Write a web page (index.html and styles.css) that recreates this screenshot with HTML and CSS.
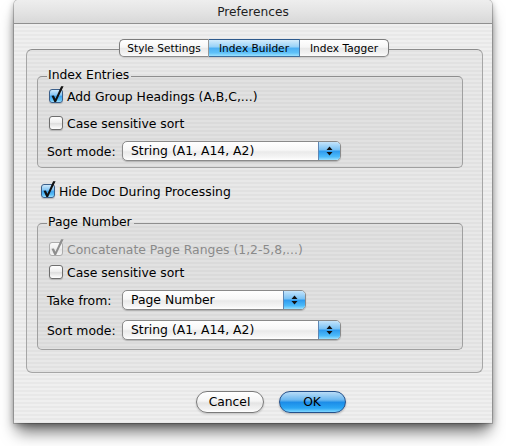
FILE: index.html
```html
<!DOCTYPE html>
<html>
<head>
<meta charset="utf-8">
<link rel="stylesheet" href="styles.css">
</head>
<body>
<div class="window">
  <div class="titlebar">Preferences</div>
  <div class="content">
    <div class="tabs">
      <span class="tab first">Style Settings</span><span class="tab selected">Index Builder</span><span class="tab last">Index Tagger</span>
    </div>
    <div class="pane">
      <fieldset class="group g1">
        <legend>Index Entries</legend>
        <div class="row check r1">
          <span class="cb on"><svg viewBox="0 0 14 14"><path d="M2.3 6.4 L4.6 6 L6 9 L11.3 -2.6 L13.6 -2.6 L6.6 12.2 L5 12.2 Z"/></svg></span>
          <span class="lbl">Add Group Headings (A,B,C,...)</span>
        </div>
        <div class="row check r2">
          <span class="cb"></span>
          <span class="lbl">Case sensitive sort</span>
        </div>
        <div class="row pop r3">
          <span class="plabel">Sort mode:</span>
          <span class="popup wide"><span class="ptext">String (A1, A14, A2)</span><span class="arrows"><svg viewBox="0 0 7 10"><path d="M3.5 0.5 L6.5 4 L0.5 4 Z M0.5 6 L6.5 6 L3.5 9.5 Z"/></svg></span></span>
        </div>
      </fieldset>
      <div class="row check hide">
        <span class="cb on"><svg viewBox="0 0 14 14"><path d="M2.3 6.4 L4.6 6 L6 9 L11.3 -2.6 L13.6 -2.6 L6.6 12.2 L5 12.2 Z"/></svg></span>
        <span class="lbl">Hide Doc During Processing</span>
      </div>
      <fieldset class="group g2">
        <legend>Page Number</legend>
        <div class="row check disabled q1">
          <span class="cb on dis"><svg viewBox="0 0 14 14"><path d="M2.3 6.4 L4.6 6 L6 9 L11.3 -2.6 L13.6 -2.6 L6.6 12.2 L5 12.2 Z"/></svg></span>
          <span class="lbl">Concatenate Page Ranges (1,2-5,8,...)</span>
        </div>
        <div class="row check q2">
          <span class="cb"></span>
          <span class="lbl">Case sensitive sort</span>
        </div>
        <div class="row pop q3">
          <span class="plabel">Take from:</span>
          <span class="popup narrow"><span class="ptext">Page Number</span><span class="arrows"><svg viewBox="0 0 7 10"><path d="M3.5 0.5 L6.5 4 L0.5 4 Z M0.5 6 L6.5 6 L3.5 9.5 Z"/></svg></span></span>
        </div>
        <div class="row pop q4">
          <span class="plabel">Sort mode:</span>
          <span class="popup wide"><span class="ptext">String (A1, A14, A2)</span><span class="arrows"><svg viewBox="0 0 7 10"><path d="M3.5 0.5 L6.5 4 L0.5 4 Z M0.5 6 L6.5 6 L3.5 9.5 Z"/></svg></span></span>
        </div>
      </fieldset>
    </div>
    <div class="buttons">
      <span class="btn cancel">Cancel</span>
      <span class="btn ok">OK</span>
    </div>
  </div>
</div>
</body>
</html>
```
FILE: styles.css
```css
html, body {
  margin: 0;
  padding: 0;
  background: #ffffff;
}
body {
  font-family: "Lucida Grande", "DejaVu Sans", sans-serif;
  font-size: 12.4px;
  color: #000;
  width: 506px;
  height: 446px;
  overflow: hidden;
}
.window {
  margin-left: 14px;
  width: 478px;
  height: 423px;
  box-sizing: border-box;
  border-radius: 5px 5px 0 0;
  background: repeating-linear-gradient(to bottom, #efefef 0, #efefef 2px, #e8e8e8 2px, #e8e8e8 4px);
  box-shadow: 0 12px 16px -3px rgba(0,0,0,0.55), 0 2px 7px rgba(0,0,0,0.35), 0 0 0 1px rgba(0,0,0,0.18);
  display: flex;
  flex-direction: column;
}
.titlebar {
  height: 23px;
  line-height: 24px;
  text-align: center;
  font-size: 12.2px;
  color: #1e1e1e;
  border-radius: 5px 5px 0 0;
  border-bottom: 1px solid #8f8f8f;
  background: linear-gradient(to bottom, #eeeeee 0%, #e4e4e4 50%, #d8d8d8 100%);
  flex: none;
}
.content {
  padding: 15px 9px 0 12px;
  display: flex;
  flex-direction: column;
}
.tabs {
  position: relative;
  z-index: 1;
  display: flex;
  justify-content: center;
  height: 18px;
  margin-bottom: -8px;
  padding-right: 1px;
}
.tab {
  box-sizing: border-box;
  height: 18px;
  line-height: 16px;
  font-size: 10.6px;
  text-align: center;
  border-top: 1px solid #7c7c7c;
  border-bottom: 1px solid #8a8a8a;
  border-right: 1px solid #9a9a9a;
  background: linear-gradient(to bottom, #ffffff 0%, #f6f6f6 45%, #e9e9e9 52%, #f1f1f1 80%, #fcfcfc 100%);
  box-shadow: 0 1px 1px rgba(0,0,0,0.12);
}
.tab.first {
  width: 90px;
  border-left: 1px solid #7c7c7c;
  border-radius: 5px 0 0 5px;
}
.tab.selected {
  width: 91px;
  border-top-color: #2f5a8c;
  border-bottom-color: #3d6d9c;
  border-right-color: #4a78a8;
  background: linear-gradient(to bottom, #d4ecfc 0%, #98d2f8 42%, #4db0f4 52%, #5fc1f8 80%, #9be2ff 100%);
}
.tab.last {
  width: 89px;
  border-right: 1px solid #7c7c7c;
  border-radius: 0 5px 5px 0;
}
.pane {
  box-sizing: border-box;
  height: 324px;
  border: 1px solid #a6a6a6;
  border-top-color: #8c8c8c;
  border-radius: 6px;
  background: rgba(0,0,0,0.028);
  padding: 17px 0 0 10px;
  display: flex;
  flex-direction: column;
  align-items: flex-start;
}
.group {
  box-sizing: border-box;
  width: 426px;
  margin: 0;
  border: 1px solid #a0a0a0;
  border-top-color: #8e8e8e;
  border-radius: 5px;
  background: rgba(0,0,0,0.028);
  padding: 2px 0 6px 9px;
  min-width: 0;
}
.group legend {
  padding: 0 2px 3px 1px;
  margin-left: 0;
  line-height: 15px;
  color: #000;
}
.g2 {
  margin-top: 14px;
  padding-top: 8px;
  padding-bottom: 9px;
}
.row {
  display: flex;
  align-items: center;
}
.check {
  height: 18px;
}
.check .cb {
  margin-left: 2px;
}
.lbl {
  margin-left: 4px;
  white-space: nowrap;
}
.r2 { margin-top: 9px; }
.r3 { margin-top: 9px; }
.hide { margin-top: 14px; }
.hide .cb { margin-left: 4px; }
.q2 { margin-top: 5px; }
.q3 { margin-top: 9px; }
.q4 { margin-top: 10px; }
.disabled .lbl { color: #8a8a8a; }
.cb {
  position: relative;
  flex: none;
  box-sizing: border-box;
  width: 14px;
  height: 14px;
  border: 1px solid #6e6e6e;
  border-radius: 3px;
  background: linear-gradient(to bottom, #fefefe 0%, #efefef 45%, #dedede 55%, #f4f4f4 85%, #ffffff 100%);
  box-shadow: 0 1px 1px rgba(0,0,0,0.18);
}
.cb.on {
  border-color: #3b5f8a;
  background: linear-gradient(to bottom, #cde8fb 0%, #85c6f4 42%, #3ea3ee 52%, #5cc0f8 82%, #a3e2ff 100%);
}
.cb.on.dis {
  border-color: #acacac;
  background: linear-gradient(to bottom, #fafafa 0%, #eeeeee 50%, #e6e6e6 55%, #f6f6f6 100%);
  box-shadow: none;
}
.cb svg {
  position: absolute;
  left: -1px;
  top: -1px;
  width: 15px;
  height: 15px;
  overflow: visible;
  fill: #111;
}
.cb.dis svg { fill: #8e8e8e; }
.pop {
  height: 20px;
}
.plabel {
  width: 75px;
  flex: none;
  white-space: nowrap;
}
.popup {
  box-sizing: border-box;
  height: 20px;
  display: flex;
  border: 1px solid #8a8a8a;
  border-radius: 5px;
  background: linear-gradient(to bottom, #ffffff 0%, #f7f7f7 45%, #eaeaea 55%, #f5f5f5 85%, #ffffff 100%);
  box-shadow: 0 1px 1px rgba(0,0,0,0.2);
  overflow: hidden;
}
.popup.wide { width: 219px; }
.popup.narrow { width: 184px; }
.ptext {
  flex: 1;
  padding-left: 8px;
  line-height: 18px;
  white-space: nowrap;
}
.arrows {
  width: 21px;
  flex: none;
  display: flex;
  align-items: center;
  justify-content: center;
  border-left: 1px solid #5d86b3;
  background: linear-gradient(to bottom, #c4e4fb 0%, #7cc3f5 42%, #2f9cef 52%, #4dbbfa 82%, #9ae0ff 100%);
}
.arrows svg {
  width: 7px;
  height: 10px;
  fill: #111;
}
.buttons {
  display: flex;
  justify-content: center;
  gap: 15px;
  margin-top: 18px;
  padding-left: 32px;
}
.btn {
  box-sizing: border-box;
  height: 22px;
  line-height: 20px;
  text-align: center;
  border-radius: 11px;
  font-size: 12.3px;
}
.cancel {
  width: 68px;
  border: 1px solid #7a7a7a;
  background: linear-gradient(to bottom, #ffffff 0%, #f5f5f5 45%, #e4e4e4 55%, #f2f2f2 85%, #ffffff 100%);
  box-shadow: 0 1px 2px rgba(0,0,0,0.2);
}
.ok {
  width: 67px;
  border: 1px solid #24508a;
  background: linear-gradient(to bottom, #b9dcf7 0%, #6ab7f0 40%, #1c8de8 52%, #2aa6f4 80%, #7fd6ff 100%);
  box-shadow: 0 1px 2px rgba(0,0,0,0.25);
}
```
